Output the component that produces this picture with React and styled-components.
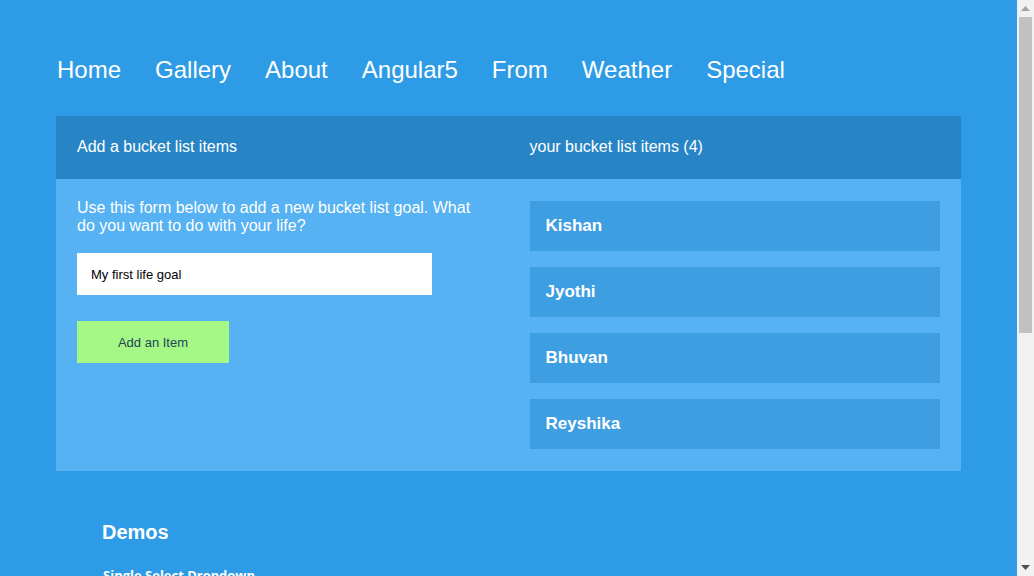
import styled, { createGlobalStyle } from 'styled-components';

const GlobalStyle = createGlobalStyle`
    html, body {
        margin: 0;
        padding: 0;
        height: 100%;
        overflow: hidden;
        background: #2e9be6;
        font-family: "Liberation Sans", Arial, sans-serif;
        color: #fff;
    }
    #root {
        height: 100%;
    }
`;

const Shell = styled.div`
    display: flex;
    height: 100%;
`;

const Main = styled.main`
    flex: 1;
    min-width: 0;
    overflow: hidden;
`;

const Scrollbar = styled.div`
    display: flex;
    flex-direction: column;
    align-items: center;
    width: 17px;
    background: #f1f1f1;
`;

const Arrow = styled.div`
    height: 17px;
    display: flex;
    align-items: center;
    justify-content: center;
`;

const Thumb = styled.div`
    width: 13px;
    height: 316px;
    background: #c1c1c1;
`;

const Track = styled.div`
    flex: 1;
`;

const Page = styled.div`
    padding: 0 56px 60px;
`;

const Nav = styled.nav`
    display: flex;
    gap: 34px;
    padding: 52px 0 28px 1px;
`;

const NavLink = styled.a`
    font-size: 24px;
    line-height: 36px;
    color: #fff;
    text-decoration: none;
    cursor: pointer;
`;

const Panel = styled.section`
    display: grid;
    grid-template-columns: 1fr 1fr;
    grid-template-rows: 63px auto;
`;

const PanelHeader = styled.div`
    display: flex;
    align-items: center;
    padding: 0 21px 2px;
    background: #2785c5;
    font-size: 16px;
`;

const PanelBody = styled.div`
    background: #56b2f2;
    padding: ${({ $top }) => $top}px 21px 22px;
`;

const Intro = styled.p`
    margin: 0 0 18px;
    font-size: 16px;
    line-height: 18px;
`;

const GoalInput = styled.input`
    display: block;
    box-sizing: border-box;
    width: 355px;
    height: 42px;
    padding: 0 14px;
    border: none;
    outline: none;
    font-family: "Liberation Sans", Arial, sans-serif;
    font-size: 13px;
    color: #000;
`;

const AddButton = styled.button`
    display: block;
    margin-top: 26px;
    width: 152px;
    height: 42px;
    border: none;
    background: #a6f886;
    color: #234556;
    font-family: "Liberation Sans", Arial, sans-serif;
    font-size: 13px;
    cursor: pointer;
`;

const List = styled.ul`
    list-style: none;
    margin: 0;
    padding: 0;
    display: flex;
    flex-direction: column;
    gap: 16px;
`;

const ListItem = styled.li`
    display: flex;
    align-items: center;
    height: 50px;
    padding: 0 16px;
    background: #3e9ee2;
    font-size: 17px;
    font-weight: bold;
`;

const Demos = styled.div`
    padding: 49px 0 0 46px;
`;

const DemoTitle = styled.h2`
    margin: 0 0 22px;
    font-size: 20px;
    line-height: 24px;
    font-weight: bold;
`;

const DemoLabel = styled.h4`
    margin: 0 0 10px 1px;
    font-family: "Open Sans", "Noto Sans", sans-serif;
    font-size: 13px;
    font-weight: bold;
`;

const DemoSelect = styled.select`
    width: 300px;
    height: 34px;
    margin-bottom: 30px;
    font-family: "Liberation Sans", Arial, sans-serif;
    font-size: 13px;
`;

const links = ['Home', 'Gallery', 'About', 'Angular5', 'From', 'Weather', 'Special'];
const items = ['Kishan', 'Jyothi', 'Bhuvan', 'Reyshika'];

const App = () => {
    return (
        <>
            <GlobalStyle />
            <Shell>
                <Main>
                    <Page>
                        <Nav>
                            {links.map(link => <NavLink key={link}>{link}</NavLink>)}
                        </Nav>
                        <Panel>
                            <PanelHeader>Add a bucket list items</PanelHeader>
                            <PanelHeader>your bucket list items ({items.length})</PanelHeader>
                            <PanelBody $top={20}>
                                <Intro>Use this form below to add a new bucket list goal. What do you want to do with your life?</Intro>
                                <GoalInput defaultValue='My first life goal' />
                                <AddButton>Add an Item</AddButton>
                            </PanelBody>
                            <PanelBody $top={22}>
                                <List>
                                    {items.map(item => <ListItem key={item}>{item}</ListItem>)}
                                </List>
                            </PanelBody>
                        </Panel>
                        <Demos>
                            <DemoTitle>Demos</DemoTitle>
                            <DemoLabel>Single Select Dropdown</DemoLabel>
                            <DemoSelect>
                                <option>Select a city</option>
                            </DemoSelect>
                            <DemoLabel>Multi Select Dropdown</DemoLabel>
                            <DemoSelect>
                                <option>Select cities</option>
                            </DemoSelect>
                        </Demos>
                    </Page>
                </Main>
                <Scrollbar>
                    <Arrow>
                        <svg width="9" height="5" viewBox="0 0 9 5"><path d="M0 5 L4.5 0 L9 5 Z" fill="#a3a3a3" /></svg>
                    </Arrow>
                    <Thumb />
                    <Track />
                    <Arrow>
                        <svg width="9" height="5" viewBox="0 0 9 5"><path d="M0 0 L9 0 L4.5 5 Z" fill="#505050" /></svg>
                    </Arrow>
                </Scrollbar>
            </Shell>
        </>
    );
};

export default App;
